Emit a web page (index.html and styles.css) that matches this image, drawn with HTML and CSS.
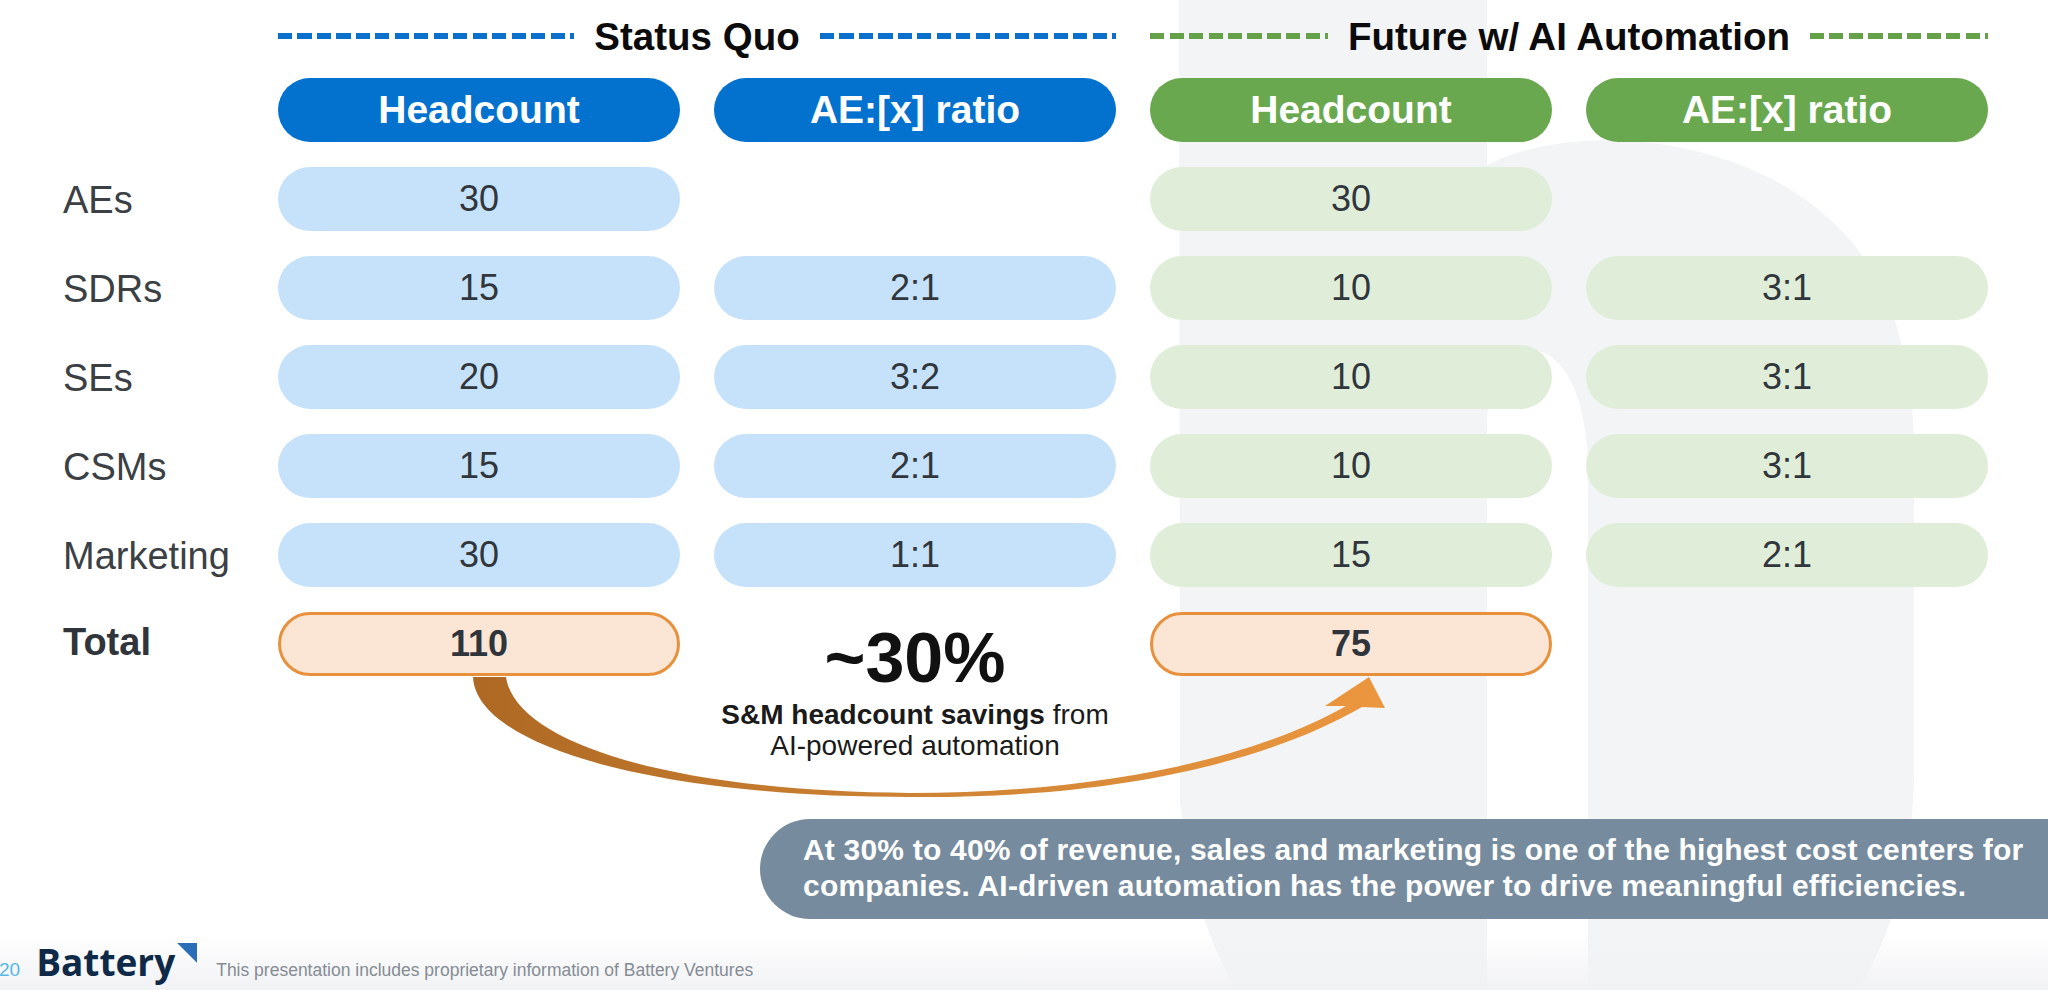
FILE: index.html
```html
<!DOCTYPE html>
<html lang="en">
<head>
<meta charset="utf-8">
<title>S&amp;M headcount – Status Quo vs Future w/ AI Automation</title>
<link rel="stylesheet" href="styles.css">
</head>
<body>
<svg class="watermark" width="2048" height="990" viewBox="0 0 2048 990" aria-hidden="true">
  <path class="wm-shape" d="M1179,0 H1487 V165 C1580,118 1760,135 1850,240 C1895,292 1912,365 1914,440 V760 C1915,860 1892,935 1858,990 H1588 V470 C1588,400 1565,352 1532,350 C1505,350 1489,380 1487,420 V990 H1236 C1205,935 1186,870 1180,800 Z"/>
</svg>

<main class="slide">
  <div class="titles">
    <div></div>
    <div class="group-title blue-title">
      <span class="dash"></span><h2>Status Quo</h2><span class="dash"></span>
    </div>
    <div class="group-title green-title">
      <span class="dash"></span><h2>Future w/ AI Automation</h2><span class="dash"></span>
    </div>
  </div>

  <div class="table">
    <div></div>
    <div class="pill head blue">Headcount</div>
    <div class="pill head blue">AE:[x] ratio</div>
    <div class="pill head green">Headcount</div>
    <div class="pill head green">AE:[x] ratio</div>

    <div class="label">AEs</div>
    <div class="pill light-blue">30</div>
    <div></div>
    <div class="pill light-green">30</div>
    <div></div>

    <div class="label">SDRs</div>
    <div class="pill light-blue">15</div>
    <div class="pill light-blue">2:1</div>
    <div class="pill light-green">10</div>
    <div class="pill light-green">3:1</div>

    <div class="label">SEs</div>
    <div class="pill light-blue">20</div>
    <div class="pill light-blue">3:2</div>
    <div class="pill light-green">10</div>
    <div class="pill light-green">3:1</div>

    <div class="label">CSMs</div>
    <div class="pill light-blue">15</div>
    <div class="pill light-blue">2:1</div>
    <div class="pill light-green">10</div>
    <div class="pill light-green">3:1</div>

    <div class="label">Marketing</div>
    <div class="pill light-blue">30</div>
    <div class="pill light-blue">1:1</div>
    <div class="pill light-green">15</div>
    <div class="pill light-green">2:1</div>

    <div class="label total-label">Total</div>
    <div class="pill total">110</div>
    <div class="savings">
      <div class="big">~30%</div>
      <div class="sub"><b>S&amp;M headcount savings</b> from<br>AI-powered automation</div>
    </div>
    <div class="pill total">75</div>
    <div></div>
  </div>

  <svg class="arrow" width="2048" height="990" viewBox="0 0 2048 990" aria-hidden="true">
    <defs>
      <linearGradient id="arrowGrad" gradientUnits="userSpaceOnUse" x1="470" y1="0" x2="1390" y2="0">
        <stop offset="0" stop-color="#ad6823"/>
        <stop offset="0.5" stop-color="#cf8434"/>
        <stop offset="1" stop-color="#ec973f"/>
      </linearGradient>
    </defs>
    <path fill="url(#arrowGrad)" d="M473,677 C476,745 650,797 910,797 C1120,799 1270,760 1362,707 L1385,708 L1369,677 L1325,706 L1346,706 C1260,755 1110,793 910,793 C660,791 515,740 506,677 Z"/>
  </svg>

  <div class="callout">At 30% to 40% of revenue, sales and marketing is one of the highest cost centers for<br>companies. AI-driven automation has the power to drive meaningful efficiencies.</div>

  <footer class="footer">
    <span class="page-num">20</span>
    <span class="logo">Battery<span class="flag"></span></span>
    <span class="disclaimer">This presentation includes proprietary information of Battery Ventures</span>
  </footer>
</main>
</body>
</html>
```

FILE: styles.css
```css
html, body {
  margin: 0;
  padding: 0;
}

body {
  width: 2048px;
  height: 990px;
  overflow: hidden;
  position: relative;
  background: #ffffff;
  font-family: "Liberation Sans", Arial, sans-serif;
  color: #30363c;
}

.watermark {
  position: absolute;
  left: 0;
  top: 0;
  z-index: 0;
}

.wm-shape {
  fill: #f3f4f6;
}

.slide {
  position: relative;
  z-index: 1;
  height: 990px;
  box-sizing: border-box;
  padding-top: 14px;
  display: flex;
  flex-direction: column;
}

/* ---------- group titles ---------- */
.titles {
  display: grid;
  grid-template-columns: 181px 838px 838px;
  column-gap: 34px;
  padding-left: 63px;
  height: 46px;
}

.group-title {
  display: flex;
  align-items: center;
  gap: 20px;
}

.group-title h2 {
  margin: 0;
  font-size: 38.5px;
  line-height: 46px;
  font-weight: 700;
  color: #0b0b0b;
  white-space: nowrap;
}

.dash {
  flex: 1;
  height: 6px;
  margin-top: -3px;
}

.blue-title .dash {
  background: repeating-linear-gradient(to right, #0a70cc 0 14px, transparent 14px 19.5px);
}

.green-title .dash {
  background: repeating-linear-gradient(to right, #64a148 0 14px, transparent 14px 19.5px);
}

/* ---------- table ---------- */
.table {
  margin-top: 18px;
  padding-left: 63px;
  display: grid;
  grid-template-columns: 181px repeat(4, 402px);
  grid-auto-rows: 64px;
  column-gap: 34px;
  row-gap: 25px;
}

.label {
  display: flex;
  align-items: center;
  padding-top: 3px;
  font-size: 38px;
  color: #3b4045;
  white-space: nowrap;
}

.total-label {
  font-weight: 700;
  color: #30353b;
  padding-top: 0;
  margin-top: -4px;
}

.pill {
  border-radius: 32px;
  display: flex;
  align-items: center;
  justify-content: center;
  font-size: 36px;
  color: #30363c;
  box-sizing: border-box;
}

.pill.head {
  font-size: 39px;
  font-weight: 700;
  color: #ffffff;
}

.blue {
  background: #0371ce;
}

.green {
  background: #6aa84f;
}

.light-blue {
  background: #c6e2fa;
}

.light-green {
  background: #e0eed9;
}

.total {
  background: #fbe6d5;
  border: 3px solid #e8913c;
  font-weight: 700;
  color: #2f353b;
}

.savings {
  align-self: start;
  margin-top: 11px;
  text-align: center;
  color: #111111;
}

.savings .big {
  font-size: 70px;
  line-height: 70px;
  font-weight: 700;
}

.savings .sub {
  margin-top: 6px;
  font-size: 28px;
  line-height: 31px;
  color: #1a1a1a;
}

.savings .sub b {
  font-weight: 700;
}

/* ---------- arrow overlay ---------- */
.arrow {
  position: absolute;
  left: 0;
  top: 0;
  pointer-events: none;
}

/* ---------- callout ---------- */
.callout {
  margin: 143px -60px 0 760px;
  height: 100px;
  box-sizing: border-box;
  padding: 13px 0 0 43px;
  background: #778b9e;
  border-radius: 50px;
  color: #ffffff;
  font-weight: 700;
  font-size: 30px;
  line-height: 36px;
  letter-spacing: 0.2px;
  white-space: nowrap;
}

/* ---------- footer ---------- */
.footer {
  margin-top: auto;
  display: flex;
  align-items: baseline;
  padding: 10px 0 9px 0;
  background: linear-gradient(to bottom, rgba(242, 243, 245, 0) 0%, #f1f2f4 100%);
}

.page-num {
  margin-left: -1px;
  font-size: 19px;
  color: #55b8e6;
}

.logo {
  position: relative;
  margin-left: 16px;
  padding-right: 22px;
  font-family: "Open Sans", "Liberation Sans", sans-serif;
  font-size: 37px;
  line-height: 38px;
  font-weight: 700;
  color: #0f2a48;
}

.flag {
  position: absolute;
  top: 0;
  right: 0;
  width: 20px;
  height: 20px;
  background: #2a6db8;
  clip-path: polygon(0 0, 100% 0, 100% 100%);
}

.disclaimer {
  margin-left: 19px;
  font-size: 17.5px;
  color: #858c94;
}
```
